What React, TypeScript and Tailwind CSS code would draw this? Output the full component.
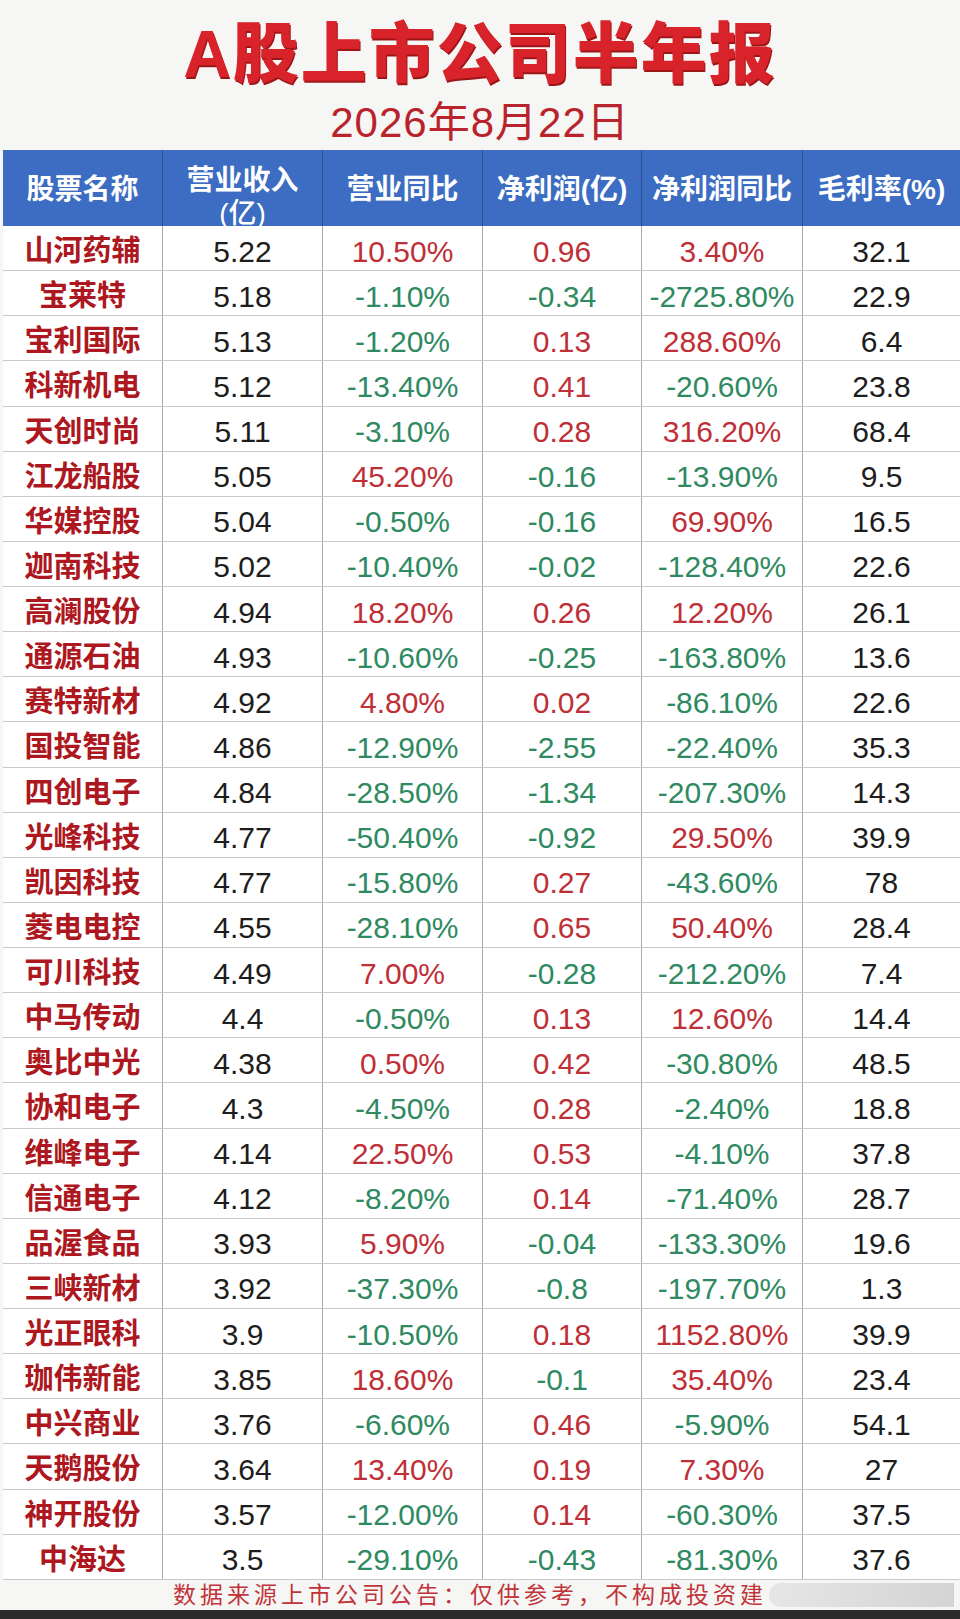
import React from "react";

type Row = [string, string, string, string, string, string];

const rows: Row[] = [
  ["山河药辅", "5.22", "10.50%", "0.96", "3.40%", "32.1"],
  ["宝莱特", "5.18", "-1.10%", "-0.34", "-2725.80%", "22.9"],
  ["宝利国际", "5.13", "-1.20%", "0.13", "288.60%", "6.4"],
  ["科新机电", "5.12", "-13.40%", "0.41", "-20.60%", "23.8"],
  ["天创时尚", "5.11", "-3.10%", "0.28", "316.20%", "68.4"],
  ["江龙船股", "5.05", "45.20%", "-0.16", "-13.90%", "9.5"],
  ["华媒控股", "5.04", "-0.50%", "-0.16", "69.90%", "16.5"],
  ["迦南科技", "5.02", "-10.40%", "-0.02", "-128.40%", "22.6"],
  ["高澜股份", "4.94", "18.20%", "0.26", "12.20%", "26.1"],
  ["通源石油", "4.93", "-10.60%", "-0.25", "-163.80%", "13.6"],
  ["赛特新材", "4.92", "4.80%", "0.02", "-86.10%", "22.6"],
  ["国投智能", "4.86", "-12.90%", "-2.55", "-22.40%", "35.3"],
  ["四创电子", "4.84", "-28.50%", "-1.34", "-207.30%", "14.3"],
  ["光峰科技", "4.77", "-50.40%", "-0.92", "29.50%", "39.9"],
  ["凯因科技", "4.77", "-15.80%", "0.27", "-43.60%", "78"],
  ["菱电电控", "4.55", "-28.10%", "0.65", "50.40%", "28.4"],
  ["可川科技", "4.49", "7.00%", "-0.28", "-212.20%", "7.4"],
  ["中马传动", "4.4", "-0.50%", "0.13", "12.60%", "14.4"],
  ["奥比中光", "4.38", "0.50%", "0.42", "-30.80%", "48.5"],
  ["协和电子", "4.3", "-4.50%", "0.28", "-2.40%", "18.8"],
  ["维峰电子", "4.14", "22.50%", "0.53", "-4.10%", "37.8"],
  ["信通电子", "4.12", "-8.20%", "0.14", "-71.40%", "28.7"],
  ["品渥食品", "3.93", "5.90%", "-0.04", "-133.30%", "19.6"],
  ["三峡新材", "3.92", "-37.30%", "-0.8", "-197.70%", "1.3"],
  ["光正眼科", "3.9", "-10.50%", "0.18", "1152.80%", "39.9"],
  ["珈伟新能", "3.85", "18.60%", "-0.1", "35.40%", "23.4"],
  ["中兴商业", "3.76", "-6.60%", "0.46", "-5.90%", "54.1"],
  ["天鹅股份", "3.64", "13.40%", "0.19", "7.30%", "27"],
  ["神开股份", "3.57", "-12.00%", "0.14", "-60.30%", "37.5"],
  ["中海达", "3.5", "-29.10%", "-0.43", "-81.30%", "37.6"],
];

const cols = "grid grid-cols-[160px_160px_160px_159px_161px_157px]";

function tone(v: string) {
  return v.startsWith("-") ? "text-[#2f8a62]" : "text-[#bf2f37]";
}

export default function App() {
  return (
    <div className="w-[960px] h-[1619px] bg-[#f6f6f4] flex flex-col font-['Liberation_Sans','Noto_Sans_CJK_SC',sans-serif] overflow-hidden">
      {/* title */}
      <div className="h-[150px] flex flex-col items-center">
        <h1 className="mt-[20px] text-[66px] leading-[68px] font-black tracking-[2px] text-[#d9232b] [text-shadow:1px_2px_0_#9e1518]">
          A股上市公司半年报
        </h1>
        <p className="mt-[14px] text-[42px] leading-[42px] tracking-[1px] text-[#b9232b]">2026年8月22日</p>
      </div>

      <div className="ml-[3px] w-[957px]">
        {/* header */}
        <div className={`${cols} h-[76px] bg-[#3c6dc2] text-white font-bold text-[28px]`}>
          <div className="flex items-center justify-center border-r border-[#2b528f]">股票名称</div>
          <div className="flex flex-col items-center justify-center border-r border-[#2b528f] leading-[33px] pt-[14px]">
            <span>营业收入</span>
            <span className="font-medium text-[28px]">(亿)</span>
          </div>
          <div className="flex items-center justify-center border-r border-[#2b528f]">营业同比</div>
          <div className="flex items-center justify-center border-r border-[#2b528f] whitespace-nowrap">净利润(亿)</div>
          <div className="flex items-center justify-center border-r border-[#2b528f] whitespace-nowrap">净利润同比</div>
          <div className="flex items-center justify-center whitespace-nowrap">毛利率(%)</div>
        </div>

        {/* body */}
        <div className="bg-white">
          {rows.map((r) => (
            <div key={r[0]} className={`${cols} h-[45.13px] border-b border-[#c9c9c9] text-[30px] leading-none`}>
              <div className="flex items-center justify-center pt-[7px] border-r border-[#a9a9a9] font-bold text-[29px] text-[#ad1720]">
                {r[0]}
              </div>
              <div className="flex items-center justify-center pt-[7px] border-r border-[#a9a9a9] text-[#1d1d1d]">{r[1]}</div>
              <div className={`flex items-center justify-center pt-[7px] border-r border-[#a9a9a9] ${tone(r[2])}`}>{r[2]}</div>
              <div className={`flex items-center justify-center pt-[7px] border-r border-[#a9a9a9] ${tone(r[3])}`}>{r[3]}</div>
              <div className={`flex items-center justify-center pt-[7px] border-r border-[#a9a9a9] whitespace-nowrap ${tone(r[4])}`}>
                {r[4]}
              </div>
              <div className="flex items-center justify-center pt-[7px] text-[#1d1d1d]">{r[5]}</div>
            </div>
          ))}
        </div>
      </div>

      {/* footer */}
      <div className="h-[29px] flex items-center pl-[173px] mt-[1px]">
        <span className="text-[23px] leading-none tracking-[4px] text-[#c0343a] whitespace-nowrap">
          数据来源上市公司公告：仅供参考，不构成投资建
        </span>
        <div className="ml-[2px] h-[24px] w-[185px] rounded-l-full bg-gradient-to-r from-[#e6e6e6] to-[#d4d4d4]" />
      </div>
      <div className="h-[9px] bg-[#2b2b2b]" />
    </div>
  );
}
